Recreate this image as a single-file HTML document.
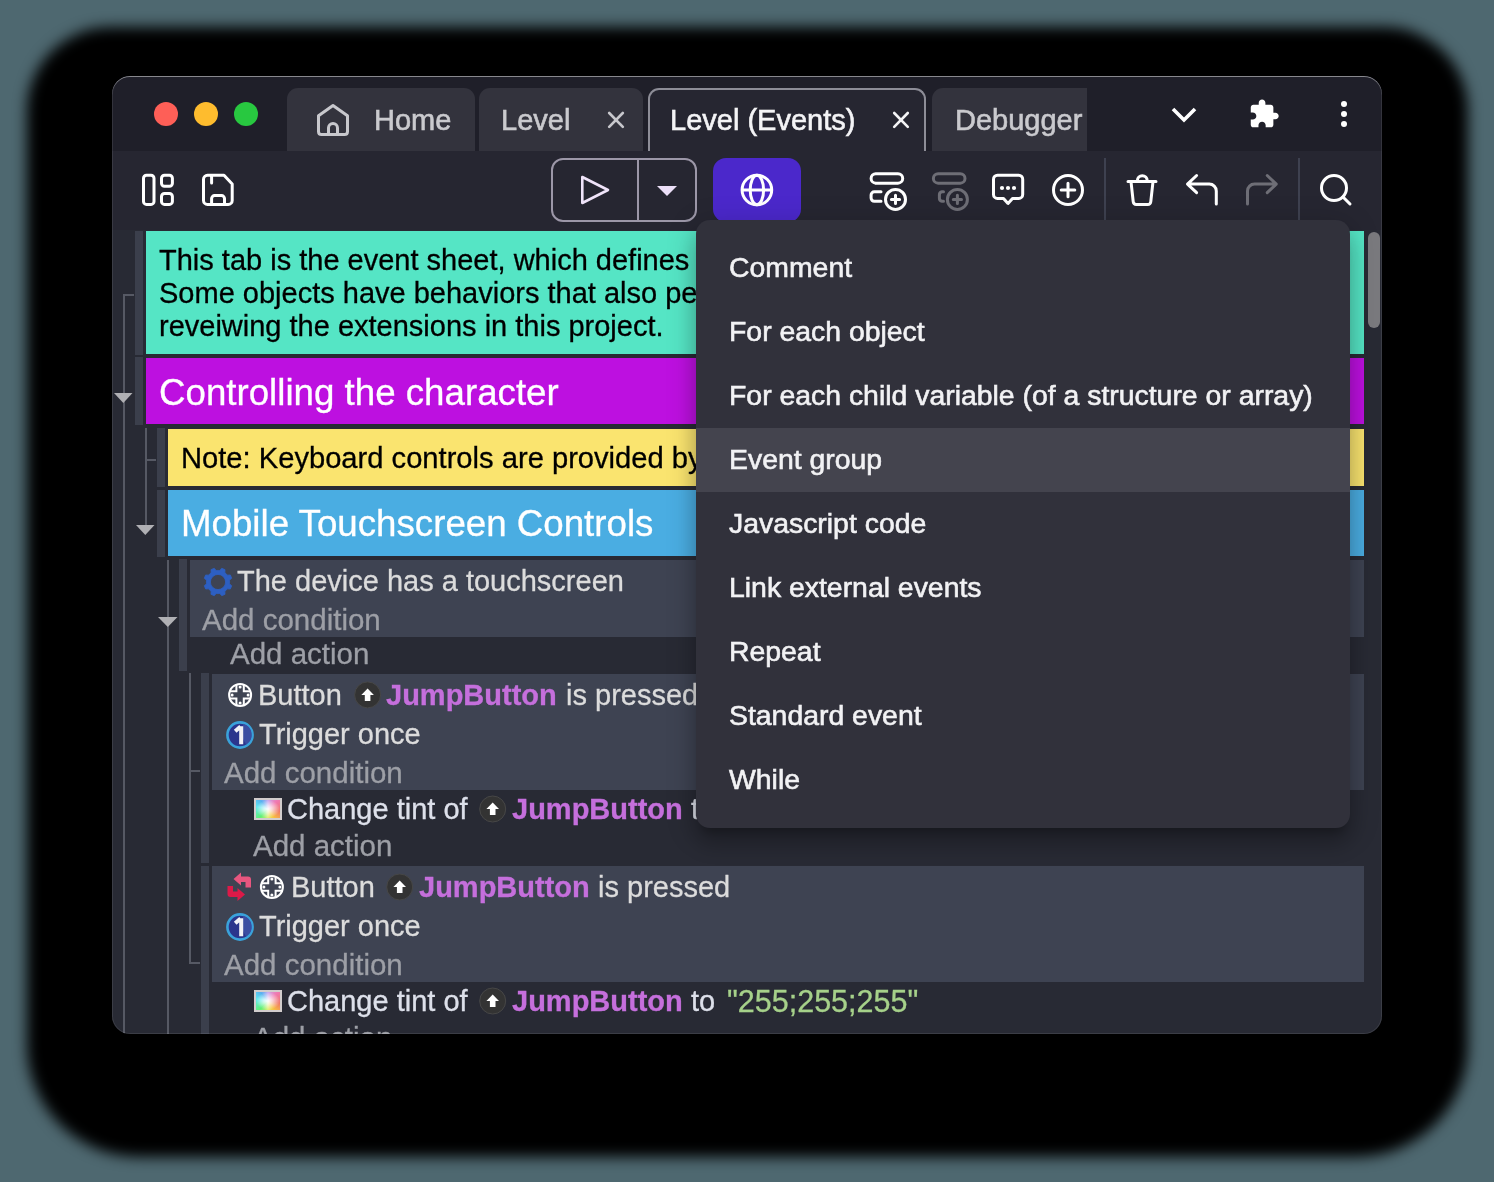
<!DOCTYPE html>
<html><head><meta charset="utf-8">
<style>
html,body{margin:0;padding:0}
html{background:rgb(78,104,112)}
body{width:1494px;height:1182px;position:relative;overflow:hidden;background:rgb(78,104,112);font-family:"Liberation Sans",sans-serif}
.a{position:absolute}
#shadow{left:27px;top:27px;width:1441px;height:1130px;border-radius:84px 84px 112px 112px;background:#000;filter:blur(7px)}
#win{left:112px;top:76px;width:1270px;height:958px;border-radius:18px;overflow:hidden;background:#282a34}
#title{left:0;top:0;width:1270px;height:75px;background:#1f1f29}
.dot{width:24px;height:24px;border-radius:50%;top:26px}
.tab{top:12px;height:63px;background:#33333d;border-radius:11px 11px 0 0}
#toolbar{left:0;top:75px;width:1270px;height:79px;background:#262631}
.t{position:absolute;white-space:pre;font-size:29px;line-height:29px;will-change:transform;-webkit-text-stroke:0.3px currentColor}
.h{position:absolute;white-space:pre;font-size:36.7px;line-height:36.7px;color:#fff;will-change:transform;-webkit-text-stroke:0.3px #fff}
.blk{position:absolute}
.tint{width:24px;height:18px;border:2px solid #d2cdcd;background:radial-gradient(ellipse at center,#fff 0,rgba(255,255,255,.7) 25%,rgba(255,255,255,0) 70%),conic-gradient(from 0deg,#c8a8f0,#f078b0 50deg,#f07868 100deg,#f8c040 145deg,#e0f070 180deg,#60f078 225deg,#60eaf0 280deg,#58b0f0 320deg,#c8a8f0)}
.tl{-webkit-text-stroke:0.6px currentColor}
.stripe{position:absolute;background:#3b3f4c;width:8px}
.vl{position:absolute;width:2px;background:#565964}
.hl{position:absolute;height:2px;background:#565964}
.cond{position:absolute;background:#3e4352}
.ct{color:#dcdcdc}
.ac{color:#9d9fa6;font-size:29.5px}
.at{color:#dde0ea}
.ob{color:#c56fdc;font-weight:bold}
#menu{left:696px;top:220px;width:654px;height:608px;border-radius:14px;background:#31313b;box-shadow:0 10px 10px -6px rgba(0,0,0,.22),0 16px 20px 2px rgba(0,0,0,.16),0 6px 28px 4px rgba(0,0,0,.16)}
.mi{position:absolute;will-change:transform;left:33px;white-space:pre;font-size:28.4px;line-height:29px;color:#f2f2f4;-webkit-text-stroke:0.6px #f2f2f4}
</style></head><body>
<div id="shadow" class="a"></div>
<div id="win" class="a">
  <div id="title" class="a"></div>
  <div class="a dot" style="left:42px;background:#fe5f57"></div>
  <div class="a dot" style="left:82px;background:#febc2e"></div>
  <div class="a dot" style="left:122px;background:#28c840"></div>
  <!-- tabs -->
  <div class="a tab" style="left:175px;width:188px"></div>
  <div class="a tab" style="left:367px;width:164px"></div>
  <div class="a tab" style="left:536px;width:278px;background:#262631;box-sizing:border-box;border:2px solid #8d8d97;border-bottom:none"></div>
  <div class="a tab" style="left:820px;width:155px;border-radius:11px 0 0 0"></div>
  <div class="t tl" style="left:262px;top:30px;color:#cacace">Home</div>
  <div class="t tl" style="left:389px;top:30px;color:#cacace">Level</div>
  <div class="t tl" style="left:558px;top:30px;color:#f4f4f6">Level (Events)</div>
  <div class="t tl" style="left:843px;top:30px;color:#cacace">Debugger</div>
  <div id="toolbar" class="a"></div>
<div class="a" style="left:-112px;top:-76px;width:1494px;height:1182px">
<!-- TOOLBAR_BUTTONS -->
<div class="a" style="left:551px;top:158px;width:146px;height:64px;box-sizing:border-box;border:2px solid #9c97a8;border-radius:12px"></div>
<div class="a" style="left:637px;top:158px;width:2px;height:64px;background:#9c97a8"></div>
<div class="a" style="left:713px;top:158px;width:88px;height:64px;border-radius:13px;background:#4b28cb"></div>
<div class="a" style="left:1104px;top:158px;width:2px;height:62px;background:#3e4150"></div>
<div class="a" style="left:1298px;top:158px;width:2px;height:62px;background:#3e4150"></div>
<!-- CONTENT -->
<div class="stripe" style="left:135px;top:231px;height:124px"></div>
<div class="blk" style="left:146px;top:231px;width:1218px;height:123px;background:#55e5c5"></div>
<div class="t" style="left:159px;top:246px;color:#000">This tab is the event sheet, which defines how the game works.</div>
<div class="t" style="left:159px;top:279px;color:#000">Some objects have behaviors that also perform logic.</div>
<div class="t" style="left:159px;top:312px;color:#000">reveiwing the extensions in this project.</div>
<div class="stripe" style="left:135px;top:357px;height:68px"></div>
<div class="blk" style="left:146px;top:358px;width:1218px;height:66px;background:#bd10e0"></div>
<div class="h" style="left:159px;top:375px">Controlling the character</div>
<div class="stripe" style="left:157px;top:428px;height:59px"></div>
<div class="blk" style="left:168px;top:429px;width:1196px;height:57px;background:#fae46f"></div>
<div class="t" style="left:181px;top:443.8px;font-size:29.15px;color:#000">Note: Keyboard controls are provided by the behavior.</div>
<div class="stripe" style="left:157px;top:490px;height:67px"></div>
<div class="blk" style="left:168px;top:490px;width:1196px;height:66px;background:#4aade2"></div>
<div class="h" style="left:181px;top:506px">Mobile Touchscreen Controls</div>
<div class="stripe" style="left:179px;top:559px;height:112px"></div>
<div class="cond" style="left:190px;top:560px;width:1174px;height:77px"></div>
<div class="t ct" style="left:237px;top:567px">The device has a touchscreen</div>
<div class="t ac" style="left:202px;top:604.5px">Add condition</div>
<div class="t ac" style="left:230px;top:639px">Add action</div>
<div class="stripe" style="left:201px;top:673px;height:190px"></div>
<div class="cond" style="left:212px;top:674px;width:1152px;height:116px"></div>
<div class="t ct" style="left:258px;top:681px">Button</div>
<div class="t ob" style="left:386px;top:681px">JumpButton</div>
<div class="t ct" style="left:566px;top:681px">is pressed</div>
<div class="t ct" style="left:259px;top:720px">Trigger once</div>
<div class="t ac" style="left:224px;top:757.5px">Add condition</div>
<div class="t at" style="left:287px;top:795px">Change tint of</div>
<div class="t ob" style="left:512px;top:795px">JumpButton</div>
<div class="t at" style="left:691px;top:795px">to</div>
<div class="t ac" style="left:253px;top:831px">Add action</div>
<div class="stripe" style="left:201px;top:866px;height:200px"></div>
<div class="cond" style="left:212px;top:866px;width:1152px;height:116px"></div>
<div class="t ct" style="left:291px;top:873px">Button</div>
<div class="t ob" style="left:419px;top:873px">JumpButton</div>
<div class="t ct" style="left:598px;top:873px">is pressed</div>
<div class="t ct" style="left:259px;top:912px">Trigger once</div>
<div class="t ac" style="left:224px;top:949.5px">Add condition</div>
<div class="t at" style="left:287px;top:987px">Change tint of</div>
<div class="t ob" style="left:512px;top:987px">JumpButton</div>
<div class="t at" style="left:691px;top:987px">to</div>
<div class="t" style="left:727px;top:985.8px;font-size:30.5px;line-height:30.5px;color:#a6d18a">"255;255;255"</div>
<div class="t ac" style="left:253px;top:1023px">Add action</div>
<!-- tree lines -->
<div class="vl" style="left:123px;top:294px;height:740px"></div>
<div class="hl" style="left:123px;top:294px;width:11px"></div>
<div class="vl" style="left:145px;top:428px;height:98px"></div>
<div class="hl" style="left:145px;top:459px;width:11px"></div>
<div class="vl" style="left:167px;top:560px;height:474px"></div>
<div class="vl" style="left:189px;top:673px;height:291px"></div>
<div class="hl" style="left:189px;top:770px;width:11px"></div>
<div class="hl" style="left:189px;top:962px;width:11px"></div>
<!-- scrollbar -->
<div class="a" style="left:1368px;top:232px;width:12px;height:96px;border-radius:6px;background:#7a7a7e"></div>
<!-- ICONS -->
<svg class="a" style="left:0;top:0" width="1494" height="1182" viewBox="0 0 1494 1182">
<defs>
<linearGradient id="tg" x1="0" y1="0" x2="1" y2="0"><stop offset="0" stop-color="#5cc8f0"/><stop offset=".5" stop-color="#e8e8f0"/><stop offset="1" stop-color="#f56a90"/></linearGradient>
<linearGradient id="tg2" x1="0" y1="0" x2="0" y2="1"><stop offset="0" stop-color="#b0a0f0" stop-opacity=".5"/><stop offset=".5" stop-color="#fff" stop-opacity=".2"/><stop offset="1" stop-color="#8af07a" stop-opacity=".8"/></linearGradient>
</defs>
<g fill="none" stroke-linecap="round" stroke-linejoin="round">
<!-- home -->
<path d="M333 105.5 L347.5 115.8 V131.5 Q347.5 134.5 344.5 134.5 H321.5 Q318.5 134.5 318.5 131.5 V115.8 Z M328.5 134.5 V128 A4.5 4.5 0 0 1 337.5 128 V134.5" stroke="#c8c8cd" stroke-width="3"/>
<path d="M609.2 113 L622.8 126.8 M622.8 113 L609.2 126.8" stroke="#c8c8cd" stroke-width="2.6"/>
<path d="M894.2 113 L907.8 126.8 M907.8 113 L894.2 126.8" stroke="#f4f4f6" stroke-width="2.6"/>
<path d="M1173 109 L1184 120 L1195 109" stroke="#fff" stroke-width="3.6" stroke-linecap="butt" stroke-linejoin="miter"/>
</g>
<path d="M20.5 11H19V7c0-1.1-.9-2-2-2h-4V3.5C13 2.12 11.88 1 10.5 1S8 2.12 8 3.5V5H4c-1.1 0-1.99.9-1.99 2v3.8H3.5c1.49 0 2.7 1.21 2.7 2.7s-1.21 2.7-2.7 2.7H2V20c0 1.1.9 2 2 2h3.8v-1.5c0-1.49 1.21-2.7 2.7-2.7 1.49 0 2.7 1.21 2.7 2.7V22H17c1.1 0 2-.9 2-2v-4h1.5c1.38 0 2.5-1.12 2.5-2.5S21.88 11 20.5 11z" transform="translate(1248.1 98.07) scale(1.33)" fill="#fff"/>
<g fill="#fff"><circle cx="1344" cy="104" r="3"/><circle cx="1344" cy="114" r="3"/><circle cx="1344" cy="124" r="3"/></g>
<g fill="none" stroke="#fff" stroke-width="3" stroke-linecap="round" stroke-linejoin="round">
<rect x="143.5" y="175.3" width="10.5" height="29.1" rx="3"/>
<rect x="161.5" y="175.3" width="10.9" height="11" rx="3"/>
<rect x="161.5" y="193.4" width="10.9" height="11" rx="3"/>
<path d="M207.5 175.3 H224 L232.2 184 V200.4 A4 4 0 0 1 228.2 204.4 H207.5 A4 4 0 0 1 203.5 200.4 V179.3 A4 4 0 0 1 207.5 175.3 Z M211.6 175.3 V183 M211.6 204.4 V198.6 A3 3 0 0 1 214.6 195.6 H221.5 A3 3 0 0 1 224.5 198.6 V204.4"/>
<path d="M582.3 177 L608 190 L582.3 203 Z" stroke="#f0e4fa" stroke-width="2.6"/>
<circle cx="756.9" cy="190" r="14.8"/><ellipse cx="756.9" cy="190" rx="6.7" ry="14.8"/><path d="M742.5 190 H771.3"/>
<rect x="871.1" y="173.7" width="31.6" height="9.5" rx="4.75"/>
<path d="M881 191.8 H874.3 A3.2 3.2 0 0 0 871.1 195 V198.1 A3.2 3.2 0 0 0 874.3 201.3 H881"/>
<circle cx="895.5" cy="199.4" r="10"/><path d="M891.4 199.4 H899.6 M895.5 195.3 V203.5"/>
<path d="M997.5 175.2 H1018.7 A4 4 0 0 1 1022.7 179.2 V194.4 A4 4 0 0 1 1018.7 198.4 H1012.5 L1008 203.5 L1003.5 198.4 H997.5 A4 4 0 0 1 993.5 194.4 V179.2 A4 4 0 0 1 997.5 175.2 Z"/>
<circle cx="1068" cy="190" r="14.5"/><path d="M1061.2 190 H1074.8 M1068 183.2 V196.8"/>
<path d="M1128 181.6 H1156 M1137.4 181.6 V180.6 A4.9 4.9 0 0 1 1147.2 180.6 V181.6 M1131 181.6 L1133.2 201.5 A3 3 0 0 0 1136.2 204.5 H1147.8 A3 3 0 0 0 1150.8 201.5 L1153 181.6"/>
<path d="M1196.6 175.5 L1187.5 184.1 L1196.6 192.7 M1187.5 184.1 H1209.3 A7 7 0 0 1 1216.3 191.1 V204"/>
<circle cx="1334" cy="188" r="12.5"/><path d="M1343 197 L1350 204"/>
</g>
<path d="M657 186 H677 L667 196 Z" fill="#ecdff8"/>
<g fill="#fff"><circle cx="1002" cy="188" r="2.1"/><circle cx="1008" cy="188" r="2.1"/><circle cx="1014" cy="188" r="2.1"/></g>
<g fill="none" stroke="#6e6e76" stroke-width="3" stroke-linecap="round" stroke-linejoin="round">
<rect x="933.4" y="173.7" width="31.6" height="9.5" rx="4.75"/>
<path d="M943.5 191.8 H942 A3 3 0 0 0 939.4 194.8 V198.3 A3 3 0 0 0 942 201.3 H943.5"/>
<circle cx="957.4" cy="199.4" r="10"/><path d="M953.3 199.4 H961.5 M957.4 195.3 V203.5"/>
<path d="M1267.2 175.5 L1276.3 184.1 L1267.2 192.7 M1276.3 184.1 H1254.5 A7 7 0 0 0 1247.5 191.1 V204"/>
</g>
<!-- tree triangles -->
<g fill="#b0b0b4"><path d="M114 393 H132.5 L123.3 403 Z"/><path d="M136 525 H154.5 L145.3 535 Z"/><path d="M158 617 H177.5 L167.8 627 Z"/></g>
<!-- event icons -->
<path d="M229.60 582.00 L229.46 583.81 L231.70 585.75 L230.33 589.04 L227.38 588.82 L226.20 590.20 L224.82 591.38 L225.04 594.33 L221.75 595.70 L219.81 593.46 L218.00 593.60 L216.19 593.46 L214.25 595.70 L210.96 594.33 L211.18 591.38 L209.80 590.20 L208.62 588.82 L205.67 589.04 L204.30 585.75 L206.54 583.81 L206.40 582.00 L206.54 580.19 L204.30 578.25 L205.67 574.96 L208.62 575.18 L209.80 573.80 L211.18 572.62 L210.96 569.67 L214.25 568.30 L216.19 570.54 L218.00 570.40 L219.81 570.54 L221.75 568.30 L225.04 569.67 L224.82 572.62 L226.20 573.80 L227.38 575.18 L230.33 574.96 L231.70 578.25 L229.46 580.19Z M225.6 582 A7.6 7.6 0 1 0 210.4 582 A7.6 7.6 0 1 0 225.6 582Z" fill="#2d5fc2" fill-rule="evenodd" stroke="#2d5fc2" stroke-width="0.8" stroke-linejoin="round"/>
<g fill="none" stroke="#fff" stroke-width="2"><circle cx="240.1" cy="694.9" r="11"/><path d="M236.40 684.54 V691.20 H229.74 M236.40 705.26 V698.60 H229.74 M243.80 684.54 V691.20 H250.46 M243.80 705.26 V698.60 H250.46"/><g fill="#fff" stroke="none"><circle cx="240.1" cy="686.9" r="1.5"/><circle cx="248.1" cy="694.9" r="1.5"/><circle cx="240.1" cy="702.9" r="1.5"/><circle cx="232.1" cy="694.9" r="1.5"/></g><circle cx="271.9" cy="887" r="11"/><path d="M268.20 876.64 V883.30 H261.54 M268.20 897.36 V890.70 H261.54 M275.60 876.64 V883.30 H282.26 M275.60 897.36 V890.70 H282.26"/><g fill="#fff" stroke="none"><circle cx="271.9" cy="879" r="1.5"/><circle cx="279.9" cy="887" r="1.5"/><circle cx="271.9" cy="895" r="1.5"/><circle cx="263.9" cy="887" r="1.5"/></g></g>
<circle cx="367.6" cy="694.9" r="13" fill="#333" stroke="#474747" stroke-width="1"/><path d="M367.6 688.4 L373.90000000000003 694.9 H370.40000000000003 V700.9 H364.8 V694.9 H361.3 Z" fill="#fff"/><circle cx="492.7" cy="809" r="13" fill="#333" stroke="#474747" stroke-width="1"/><path d="M492.7 802.5 L499.0 809 H495.5 V815 H489.9 V809 H486.4 Z" fill="#fff"/><circle cx="399.7" cy="887" r="13" fill="#333" stroke="#474747" stroke-width="1"/><path d="M399.7 880.5 L406.0 887 H402.5 V893 H396.9 V887 H393.4 Z" fill="#fff"/><circle cx="492.7" cy="1001" r="13" fill="#333" stroke="#474747" stroke-width="1"/><path d="M492.7 994.5 L499.0 1001 H495.5 V1007 H489.9 V1001 H486.4 Z" fill="#fff"/>
<circle cx="240" cy="735.0" r="12.6" fill="#2b358c" stroke="#3aa2da" stroke-width="2.6"/><path d="M243 723.7 A11.3 11.3 0 0 1 246 744.5 L243 739.0 Z" fill="#3b4ea2"/><path d="M235.2 731.2 L240.6 726.4 M241.2 726.2 V744.2" fill="none" stroke="#f2f2f6" stroke-width="4" stroke-linecap="butt" stroke-linejoin="round"/><circle cx="240" cy="927.0" r="12.6" fill="#2b358c" stroke="#3aa2da" stroke-width="2.6"/><path d="M243 915.7 A11.3 11.3 0 0 1 246 936.5 L243 931.0 Z" fill="#3b4ea2"/><path d="M235.2 923.2 L240.6 918.4 M241.2 918.2 V936.2" fill="none" stroke="#f2f2f6" stroke-width="4" stroke-linecap="butt" stroke-linejoin="round"/>

<g>
<path d="M233.5 879 L241 872.5 V876.5 H248 Q251 876.5 251 879.5 V887.5 H245.5 V882 H241 V885.5 Z" fill="#e8567f"/>
<path d="M245 894.5 L237.5 901 V897 H230.5 Q227.5 897 227.5 894 V886 H233 V891.5 H237.5 V888 Z" fill="#dc1a48"/>
</g>
</svg>
<div class="a tint" style="left:254px;top:798px"></div>
<div class="a tint" style="left:254px;top:990px"></div>
<!-- MENU -->
<div id="menu" class="a">
<div class="a" style="left:0;top:208px;width:654px;height:64px;background:#44444e"></div>
<div class="mi" style="top:33px">Comment</div>
<div class="mi" style="top:97px">For each object</div>
<div class="mi" style="top:161px">For each child variable (of a structure or array)</div>
<div class="mi" style="top:225px">Event group</div>
<div class="mi" style="top:289px">Javascript code</div>
<div class="mi" style="top:353px">Link external events</div>
<div class="mi" style="top:417px">Repeat</div>
<div class="mi" style="top:481px">Standard event</div>
<div class="mi" style="top:545px">While</div>
</div>
</div>
<div class="a" style="left:0;top:0;width:1270px;height:958px;border-radius:18px;box-shadow:inset 0 0 0 1px rgba(255,255,255,.09), inset 0 1px 0 rgba(255,255,255,.42)"></div>
</div>
</body></html>
